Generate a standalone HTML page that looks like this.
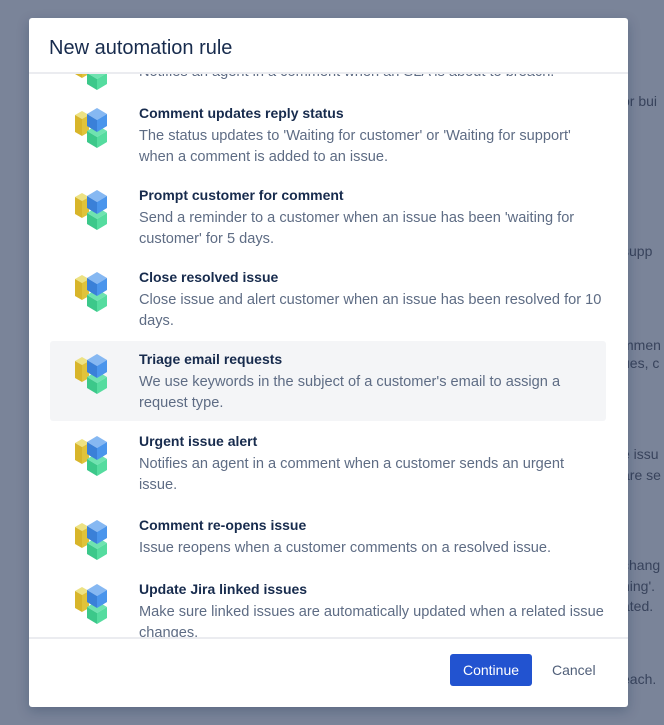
<!DOCTYPE html>
<html><head><meta charset="utf-8"><style>
*{margin:0;padding:0;box-sizing:border-box}
body{width:664px;height:725px;overflow:hidden;background:#7a8499;font-family:"Liberation Sans",sans-serif;position:relative}
.bg{position:absolute;left:622px;font-size:14px;color:#38435c;white-space:nowrap}
.modal{position:absolute;left:29px;top:18px;width:599px;height:689px;background:#fff;border-radius:3px;overflow:hidden;box-shadow:0 4px 12px rgba(9,30,66,.25)}
.hdr{position:absolute;left:20px;top:19px;font-size:20px;color:#172b4d}
.line{position:absolute;left:0;width:599px;height:2px;background:#ebecf0}
.scroll{position:absolute;left:0;top:56px;width:599px;height:564px;overflow:hidden}
.it{position:absolute;left:0;width:599px}
.it svg{position:absolute;left:45px}
.t{position:absolute;left:110px;font-size:14px;font-weight:bold;color:#172b4d;white-space:nowrap;line-height:20px}
.d{position:absolute;left:110px;font-size:14.6px;color:#5e6c84;line-height:21px;white-space:nowrap}
.hl{position:absolute;left:21px;width:556px;height:80px;background:#f4f5f7;border-radius:3px}
.btn{position:absolute;left:421px;top:636px;width:82px;height:32px;background:#2253d0;color:#fff;font-size:14px;border-radius:3px;text-align:center;line-height:32px}
.cancel{position:absolute;left:523px;top:636px;line-height:32px;font-size:14px;color:#505f79}
</style></head><body>
<div class="bg" style="top:93px">or bui</div>
<div class="bg" style="top:243px">supp</div>
<div class="bg" style="top:337px">mmen</div>
<div class="bg" style="top:355px">ues, c</div>
<div class="bg" style="top:446px">e issu</div>
<div class="bg" style="top:467px">are se</div>
<div class="bg" style="top:557px">chang</div>
<div class="bg" style="top:578px">ning'.</div>
<div class="bg" style="top:598px">ated.</div>
<div class="bg" style="top:671px">each.</div>
<svg width="0" height="0" style="position:absolute"><defs>
<g id="ic">
<polygon points="1,7 8,3 15,7 8,11" fill="#ede283"/>
<polygon points="1,7 8,11 8,28 1,24" fill="#d8b52a"/>
<polygon points="8,11 15,7 15,24 8,28" fill="#e0c33a"/>
<polygon points="13,23 23,17 33,23 23,29" fill="#6fe3b0"/>
<polygon points="13,23 23,29 23,40 13,34" fill="#3cc88a"/>
<polygon points="23,29 33,23 33,34 23,40" fill="#55dc9f"/>
<polygon points="13,6 23,0 33,6 23,12" fill="#86b8f2"/>
<polygon points="13,6 23,12 23,24 13,18" fill="#3a80d8"/>
<polygon points="23,12 33,6 33,18 23,24" fill="#4a95ec"/>
</g></defs></svg>
<div class="modal">
<div class="hdr">New automation rule</div>
<div class="scroll">
<div class="hl" style="top:267px"></div>
<div class="it" style="top:-12px"><svg width="36" height="42" style="top:-12px"><use href="#ic"/></svg><div class="d" style="top:0">Notifies an agent in a comment when an SLA is about to breach.</div></div>
<div class="it" style="top:29px"><svg width="36" height="42" style="top:5px"><use href="#ic"/></svg><div class="t" style="top:0">Comment updates reply status</div><div class="d" style="top:23px">The status updates to 'Waiting for customer' or 'Waiting for support'<br>when a comment is added to an issue.</div></div>
<div class="it" style="top:111px"><svg width="36" height="42" style="top:5px"><use href="#ic"/></svg><div class="t" style="top:0">Prompt customer for comment</div><div class="d" style="top:23px">Send a reminder to a customer when an issue has been 'waiting for<br>customer' for 5 days.</div></div>
<div class="it" style="top:193px"><svg width="36" height="42" style="top:5px"><use href="#ic"/></svg><div class="t" style="top:0">Close resolved issue</div><div class="d" style="top:23px">Close issue and alert customer when an issue has been resolved for 10<br>days.</div></div>
<div class="it" style="top:275px"><svg width="36" height="42" style="top:5px"><use href="#ic"/></svg><div class="t" style="top:0">Triage email requests</div><div class="d" style="top:23px">We use keywords in the subject of a customer's email to assign a<br>request type.</div></div>
<div class="it" style="top:357px"><svg width="36" height="42" style="top:5px"><use href="#ic"/></svg><div class="t" style="top:0">Urgent issue alert</div><div class="d" style="top:23px">Notifies an agent in a comment when a customer sends an urgent<br>issue.</div></div>
<div class="it" style="top:441px"><svg width="36" height="42" style="top:5px"><use href="#ic"/></svg><div class="t" style="top:0">Comment re-opens issue</div><div class="d" style="top:23px">Issue reopens when a customer comments on a resolved issue.</div></div>
<div class="it" style="top:505px"><svg width="36" height="42" style="top:5px"><use href="#ic"/></svg><div class="t" style="top:0">Update Jira linked issues</div><div class="d" style="top:23px">Make sure linked issues are automatically updated when a related issue<br>changes.</div></div>
</div>
<div class="line" style="top:54px"></div>
<div class="line" style="top:619px"></div>
<div class="btn">Continue</div>
<div class="cancel">Cancel</div>
</div>
</body></html>
